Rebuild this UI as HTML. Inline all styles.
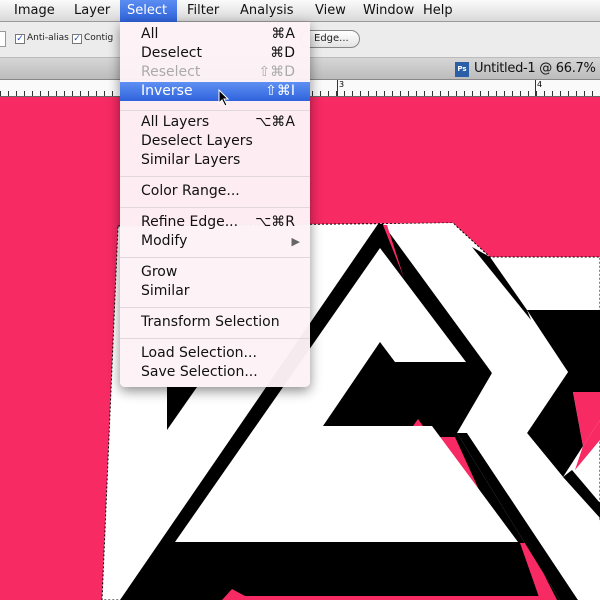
<!DOCTYPE html>
<html><head><meta charset="utf-8"><style>
*{margin:0;padding:0;box-sizing:border-box}
body{width:600px;height:600px;overflow:hidden;position:relative;background:#f72a64;font-family:"DejaVu Sans","Liberation Sans",sans-serif}
.bar{position:absolute;left:0;width:600px;white-space:nowrap}
#menubar{top:0;height:22px;background:linear-gradient(#fbfbfb,#d9d9d9);border-bottom:1px solid #999;font-size:13px;color:#111}
#menubar span{position:absolute;top:3px}
#opts{top:22px;height:36px;background:#ececec;border-bottom:1px solid #bbb;font-size:9px;color:#222}
#tabs{top:58px;height:22px;background:linear-gradient(#d6d6d6,#bcbcbc);border-bottom:1px solid #888;font-size:13px;color:#111}
#ruler{top:80px;height:17px;background:#fafafa;border-bottom:1px solid #666;
background-image:repeating-linear-gradient(90deg,#333 0 1px,transparent 1px 8px);background-size:100% 5px;background-repeat:no-repeat;background-position:0 11px}
#menu{position:absolute;left:120px;top:22px;width:190px;height:365px;background:rgba(253,243,246,.97);border-radius:0 0 5px 5px;box-shadow:0 4px 12px rgba(0,0,0,.45);font-size:14px;color:#111}
.it{position:absolute;left:21px;right:15px;height:19px;line-height:19px;white-space:nowrap}
.it b{font-weight:normal;position:absolute;right:0;top:0}
.sep{position:absolute;left:0;right:0;height:1px;background:#e2d8db}
.cb{display:inline-block;width:10px;height:10px;background:#fff;border:1px solid #777;vertical-align:-1px;margin-right:2px;color:#1a4fb4;font-size:9px;line-height:8px;text-align:center}
</style></head><body>
<svg style="position:absolute;left:0;top:97px" width="600" height="503" viewBox="0 97 600 503">
<rect x="0" y="97" width="600" height="503" fill="#f72a64"/>
<polygon points="118,226 453,223 490,257 600,257 600,600 102,600" fill="#fff" stroke="#000" stroke-dasharray="2,2" stroke-width="1"/>
<polygon points="378,224 392,224 492,373 457,433 560,600 120,600" fill="#000"/>
<polygon points="438,437 455,437 480,492" fill="#f72a64"/>
<polygon points="520,543 528,543 557,600 540,600" fill="#f72a64"/>
<polygon points="380,248 466,362 395,362 380,342 323,426 432,426 518,542 175,542" fill="#fff"/>
<polygon points="472,247 490,257 527,310 531,320" fill="#000"/>
<polygon points="527,310 600,310 600,392 573,392 583,446 563,477 527,433 568,372" fill="#000"/>
<polygon points="457,433 467,433 578,600 560,600" fill="#000"/>
<polygon points="383,224 453,223 568,372 527,433 600,522 600,600 578,600 467,433 492,373" fill="#fff"/>
<polygon points="383,225 387,225 404,278" fill="#f72a64"/>
<polygon points="573,392 600,392 600,420 583,446" fill="#f72a64"/>
<polygon points="563,477 572,470 600,503 600,518" fill="#000"/>
<polygon points="583,446 600,420 600,440 575,470" fill="#f72a64"/>
<polygon points="232,589 245,596 540,596 543,600 222,600" fill="#f72a64"/>
<polygon points="413,426 418,419 423,426" fill="#f72a64"/>
<polygon points="167,387 197,387 167,430" fill="#000"/>
</svg>
<div class="bar" id="menubar">
<span style="left:14px">Image</span><span style="left:74px">Layer</span>
<span style="left:120px;top:0;width:57px;height:22px;background:linear-gradient(#5b8df2,#2e62d9);color:#fff;padding:3px 0 0 7px">Select</span>
<span style="left:187px">Filter</span><span style="left:240px">Analysis</span><span style="left:315px">View</span><span style="left:363px">Window</span><span style="left:423px">Help</span>
</div>
<div class="bar" id="opts">
<div style="position:absolute;left:-4px;top:9px;width:10px;height:16px;background:#fff;border:1px solid #999"></div>
<span style="position:absolute;left:15px;top:11px"><span class="cb">✓</span>Anti-alias</span>
<span style="position:absolute;left:72px;top:11px"><span class="cb">✓</span>Contig</span>
<div style="position:absolute;left:300px;top:8px;width:60px;height:18px;border:1px solid #888;border-radius:9px;background:linear-gradient(#fff,#e4e4e4);font-size:10px;padding:2px 0 0 13px">Edge...</div>
</div>
<div class="bar" id="tabs">
<div style="position:absolute;left:455px;top:4px;width:14px;height:15px;background:#2a5fa8;color:#fff;font-size:7px;line-height:15px;text-align:center;font-weight:bold">Ps</div>
<span style="position:absolute;left:474px;top:3px;letter-spacing:-0.3px">Untitled-1 @ 66.7%</span>
</div>
<div class="bar" id="ruler">
<span style="position:absolute;left:337px;top:0;font-size:8px;border-left:1px solid #333;padding-left:1px;height:16px">3</span>
<span style="position:absolute;left:535px;top:0;font-size:8px;border-left:1px solid #333;padding-left:1px;height:16px">4</span>
</div>
<div id="menu">
<div class="it" style="top:3px">All<b>⌘A</b></div>
<div class="it" style="top:22px">Deselect<b>⌘D</b></div>
<div class="it" style="top:41px;color:#aaa">Reselect<b>⇧⌘D</b></div>
<div style="position:absolute;left:0;right:0;top:60px;height:19px;background:linear-gradient(#5f90f3,#2f63dc)"></div>
<div class="it" style="top:60px;color:#fff">Inverse<b>⇧⌘I</b></div>
<div class="sep" style="top:88px"></div>
<div class="it" style="top:91px">All Layers<b>⌥⌘A</b></div>
<div class="it" style="top:110px">Deselect Layers</div>
<div class="it" style="top:129px">Similar Layers</div>
<div class="sep" style="top:154px"></div>
<div class="it" style="top:160px">Color Range...</div>
<div class="sep" style="top:185px"></div>
<div class="it" style="top:191px">Refine Edge...<b>⌥⌘R</b></div>
<div class="it" style="top:210px">Modify<b style="color:#666;font-size:11px;right:-5px">▶</b></div>
<div class="sep" style="top:235px"></div>
<div class="it" style="top:241px">Grow</div>
<div class="it" style="top:260px">Similar</div>
<div class="sep" style="top:285px"></div>
<div class="it" style="top:291px">Transform Selection</div>
<div class="sep" style="top:316px"></div>
<div class="it" style="top:322px">Load Selection...</div>
<div class="it" style="top:341px">Save Selection...</div>
</div>
<svg style="position:absolute;left:218px;top:89px" width="14" height="18" viewBox="0 0 14 18"><path d="M1 1 L1 14 L4 11 L7 17 L9 16 L6 10 L10 10 Z" fill="#000" stroke="#fff" stroke-width="1"/></svg>
</body></html>
